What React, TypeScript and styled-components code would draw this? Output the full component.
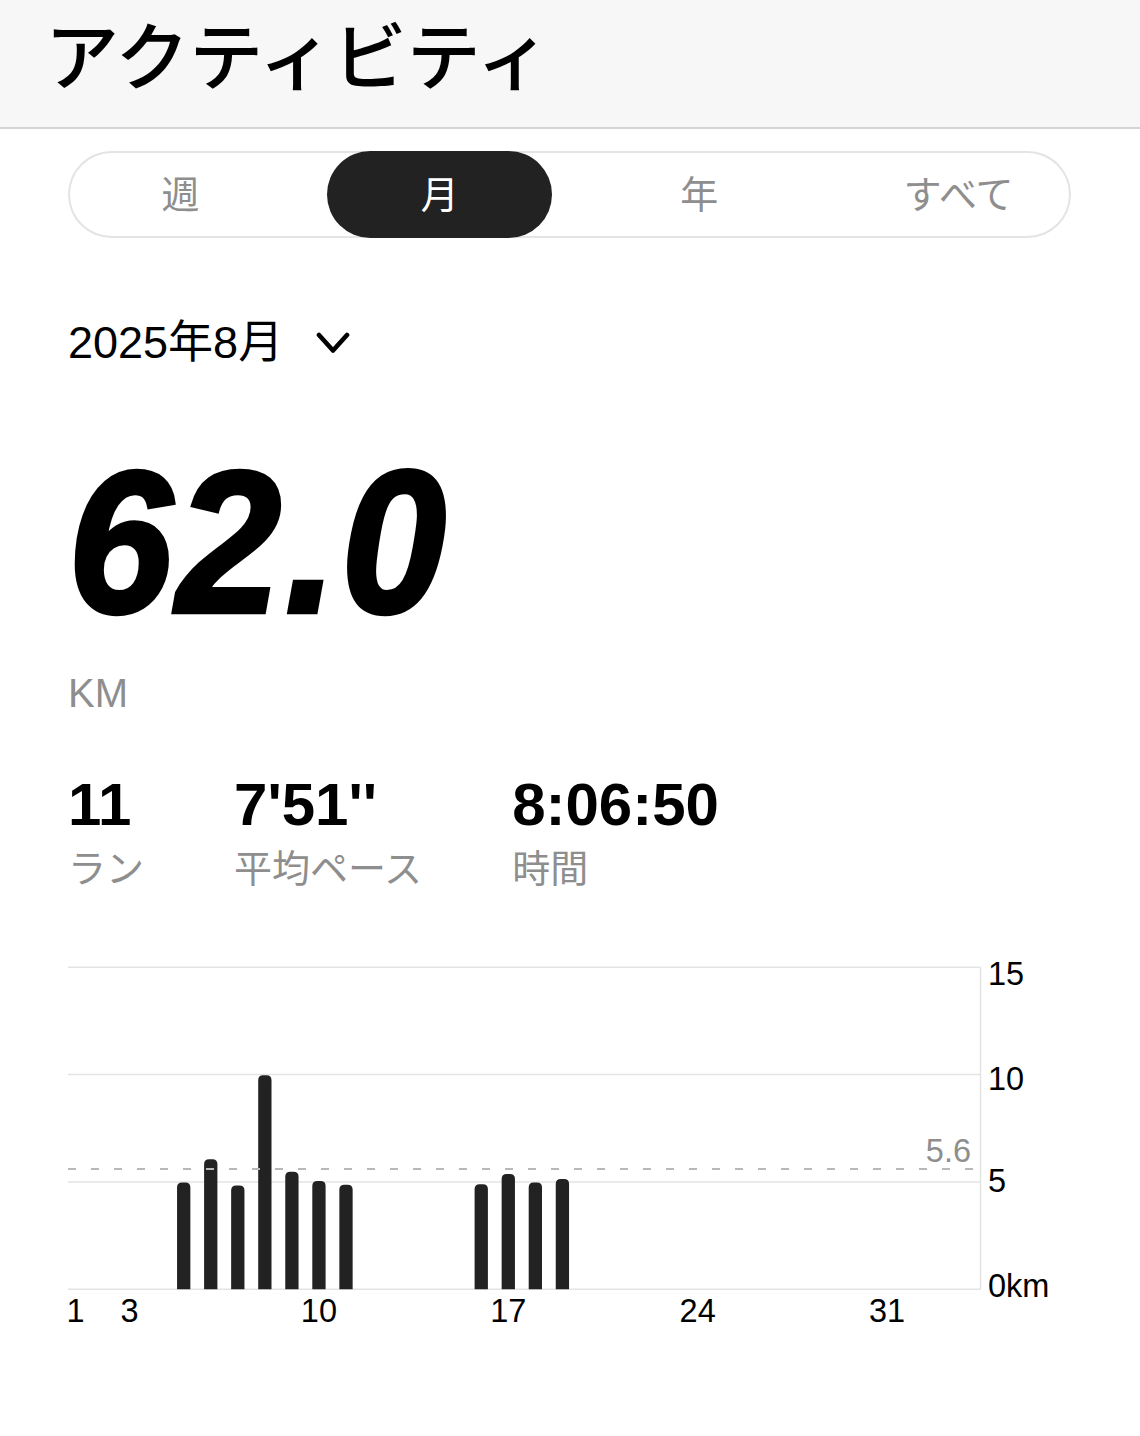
import React from 'react';
import styled, {createGlobalStyle} from 'styled-components';

const SANS = `"Liberation Sans", "Noto Sans CJK JP", sans-serif`;
const CJK = `"Noto Sans CJK JP", "Liberation Sans", sans-serif`;

const GlobalStyle = createGlobalStyle`
	html, body {
		margin: 0;
		padding: 0;
		background: #fff;
	}
	body {
		font-family: ${SANS};
		color: #000;
	}
`;

const Page = styled.div`
	width: 1140px;
	min-height: 1436px;
	background: #fff;
`;

const Header = styled.header`
	box-sizing: border-box;
	height: 129px;
	padding: 7px 0 0 45px;
	background: #f7f7f7;
	border-bottom: 2px solid #d4d4d4;
`;

const Title = styled.h1`
	margin: 0;
	font: 500 74px/89px ${CJK};
	color: #000;
`;

const Content = styled.main`
	padding: 0 69px 0 68px;
`;

const Segmented = styled.div`
	margin-top: 22px;
	height: 87px;
	display: flex;
	justify-content: space-between;
	border-radius: 44px;
	box-shadow: inset 0 0 0 2px #e4e4e4;
`;

const Segment = styled.div<{$active?: boolean}>`
	width: 225px;
	height: 87px;
	border-radius: 44px;
	text-align: center;
	font: 400 38px/81px ${CJK};
	color: ${(p) => (p.$active ? '#fff' : '#8e8e8e')};
	background: ${(p) => (p.$active ? '#222' : 'transparent')};
`;

const DateRow = styled.div`
	margin-top: 83px;
	height: 44px;
	display: flex;
	align-items: center;
	gap: 33px;
`;

const DateText = styled.span`
	font: 400 45px/44px ${SANS};
	color: #000;
`;

const BigNumber = styled.div`
	margin-top: 88px;
	height: 188px;
	font: italic 700 188px/188px "Liberation Sans", sans-serif;
	letter-spacing: 4px;
	-webkit-text-stroke: 4px #000;
	color: #000;
	transform: scaleY(1.08);
	transform-origin: 0 84.65%;
`;

const Unit = styled.div`
	margin-top: 32px;
	font: 400 40px/40px ${SANS};
	color: #8e8e8e;
`;

const Stats = styled.div`
	margin-top: 62px;
	display: flex;
	gap: 90px;
`;

const Stat = styled.div`
	display: flex;
	flex-direction: column;
`;

const StatValue = styled.span`
	font: 700 60px/60px ${SANS};
	color: #000;
`;

const StatLabel = styled.span`
	margin-top: 12px;
	font: 400 38px/38px ${CJK};
	color: #8e8e8e;
`;

const Chart = styled.svg`
	display: block;
	margin-top: 55px;
	overflow: visible;
`;

const ChartText = styled.text<{$muted?: boolean}>`
	font-family: "Liberation Sans", sans-serif;
	font-size: 32.5px;
	fill: ${(p) => (p.$muted ? '#8e8e8e' : '#000')};
`;

const tabs = ['週', '月', '年', 'すべて'];

const stats = [
	{value: '11', label: 'ラン'},
	{value: "7'51''", label: '平均ペース'},
	{value: '8:06:50', label: '時間'},
];

const runs = [
	{day: 5, km: 4.97},
	{day: 6, km: 6.06},
	{day: 7, km: 4.83},
	{day: 8, km: 9.97},
	{day: 9, km: 5.48},
	{day: 10, km: 5.04},
	{day: 11, km: 4.87},
	{day: 16, km: 4.89},
	{day: 17, km: 5.37},
	{day: 18, km: 4.97},
	{day: 19, km: 5.14},
];

// chart geometry
const PLOT_W = 912.5;
const BASE = 349.3;
const PER_KM = 21.47;
const DAY0 = 7.5;
const DAY_STEP = 27.05;
const BAR_W = 13.3;
const AVG = 5.6;

const yOf = (km: number) => BASE - km * PER_KM;
const xOf = (day: number) => DAY0 + (day - 1) * DAY_STEP;

const barPath = (day: number, km: number) => {
	const x0 = xOf(day) - BAR_W / 2;
	const x1 = x0 + BAR_W;
	const top = yOf(km);
	const r = 5;
	return `M${x0},${BASE} L${x0},${top + r} Q${x0},${top} ${x0 + r},${top} L${x1 - r},${top} Q${x1},${top} ${x1},${top + r} L${x1},${BASE} Z`;
};

const yLabels = [
	{text: '15', y: 45},
	{text: '10', y: 149.5},
	{text: '5', y: 252},
	{text: '0km', y: 357},
];

const Chevron = () => (
	<svg width="34" height="22" viewBox="0 0 34 22">
		<polyline
			points="3,3 17,18.5 31,3"
			fill="none"
			stroke="#000"
			strokeWidth="4.6"
			strokeLinecap="round"
			strokeLinejoin="round"
		/>
	</svg>
);

const DistanceChart = () => (
	<Chart width="1004" height="400" viewBox="0 0 1004 400">
		{[15, 10, 5, 0].map((v) => (
			<line key={v} x1="0" x2={PLOT_W} y1={yOf(v)} y2={yOf(v)} stroke="#e4e4e4" strokeWidth="1.5" />
		))}
		<line x1={PLOT_W} x2={PLOT_W} y1={yOf(15)} y2={BASE} stroke="#e4e4e4" strokeWidth="1.5" />
		{runs.map((r) => (
			<path key={r.day} d={barPath(r.day, r.km)} fill="#222" />
		))}
		<line
			x1="0"
			x2={PLOT_W}
			y1={yOf(AVG)}
			y2={yOf(AVG)}
			stroke="#b8b8b8"
			strokeWidth="2"
			strokeDasharray="8 15"
		/>
		<ChartText $muted x="903" y="222" textAnchor="end">
			5.6
		</ChartText>
		{yLabels.map((l) => (
			<ChartText key={l.text} x="920" y={l.y}>
				{l.text}
			</ChartText>
		))}
		{[1, 3, 10, 17, 24, 31].map((d) => (
			<ChartText key={d} x={xOf(d)} y="382.3" textAnchor="middle">
				{d}
			</ChartText>
		))}
	</Chart>
);

const App = () => {
	return (
		<Page>
			<GlobalStyle />
			<Header>
				<Title>アクティビティ</Title>
			</Header>
			<Content>
				<Segmented>
					{tabs.map((t) => (
						<Segment key={t} $active={t === '月'}>
							{t}
						</Segment>
					))}
				</Segmented>

				<DateRow>
					<DateText>2025年8月</DateText>
					<Chevron />
				</DateRow>

				<BigNumber>62.0</BigNumber>
				<Unit>KM</Unit>

				<Stats>
					{stats.map((s) => (
						<Stat key={s.label}>
							<StatValue>{s.value}</StatValue>
							<StatLabel>{s.label}</StatLabel>
						</Stat>
					))}
				</Stats>

				<DistanceChart />
			</Content>
		</Page>
	);
};

export default App;
